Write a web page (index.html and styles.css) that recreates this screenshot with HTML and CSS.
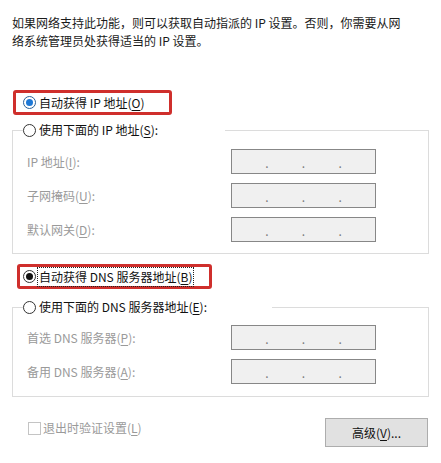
FILE: index.html
```html
<!DOCTYPE html>
<html lang="zh-CN">
<head>
<meta charset="utf-8">
<title>IP 设置</title>
<link rel="stylesheet" href="styles.css">
</head>
<body>
<div class="page">
  <p class="intro">如果网络支持此功能，则可以获取自动指派的 IP 设置。否则，你需要从网<br>络系统管理员处获得适当的 IP 设置。</p>

  <div class="annot annot-ip">
    <span class="radio checked blue"></span>
    <span class="opt-text">自动获得 IP 地址(<u>O</u>)</span>
  </div>

  <fieldset class="group group-ip">
    <legend class="legend legend-ip">
      <span class="radio"></span>
      <span class="opt-text">使用下面的 IP 地址(<u>S</u>):</span>
    </legend>
    <div class="rows">
      <span class="lbl">IP 地址(<u>I</u>):</span>
      <span class="ipbox"><span>.</span><span>.</span><span>.</span></span>
      <span class="lbl">子网掩码(<u>U</u>):</span>
      <span class="ipbox"><span>.</span><span>.</span><span>.</span></span>
      <span class="lbl">默认网关(<u>D</u>):</span>
      <span class="ipbox"><span>.</span><span>.</span><span>.</span></span>
    </div>
  </fieldset>

  <div class="annot annot-dns">
    <span class="radio checked"></span>
    <span class="opt-text focus">自动获得 DNS 服务器地址(<u>B</u>)</span>
  </div>

  <fieldset class="group group-dns">
    <legend class="legend legend-dns">
      <span class="radio"></span>
      <span class="opt-text">使用下面的 DNS 服务器地址(<u>E</u>):</span>
    </legend>
    <div class="rows">
      <span class="lbl">首选 DNS 服务器(<u>P</u>):</span>
      <span class="ipbox"><span>.</span><span>.</span><span>.</span></span>
      <span class="lbl">备用 DNS 服务器(<u>A</u>):</span>
      <span class="ipbox"><span>.</span><span>.</span><span>.</span></span>
    </div>
  </fieldset>

  <div class="footer">
    <div class="check">
      <span class="checkbox"></span>
      <span class="check-text">退出时验证设置(<u>L</u>)</span>
    </div>
    <div class="btn">高级(<u>V</u>)...</div>
  </div>
</div>
</body>
</html>
```

FILE: styles.css
```css
html, body {
  margin: 0;
  padding: 0;
  background: #ffffff;
}

body {
  font-family: "Noto Sans CJK SC", "Noto Sans", sans-serif;
  font-size: 12px;
  line-height: 18px;
  color: #111111;
}

.page {
  width: 441px;
  height: 463px;
  padding-top: 14px;
  box-sizing: border-box;
  overflow: hidden;
}

.intro {
  margin: 0 0 0 12px;
  color: #1a1a1a;
}

u {
  text-decoration: underline;
  text-underline-offset: 2px;
}

/* red annotation boxes */
.annot {
  display: flex;
  align-items: center;
  height: 25px;
  box-sizing: border-box;
  border: 3px solid #cf2f2c;
  border-radius: 3px;
}

.annot-ip {
  width: 159px;
  margin: 40px 0 0 13px;
  padding-left: 7px;
}

.annot-dns {
  width: 195px;
  margin: 10px 0 0 17px;
  padding-left: 3px;
}

/* radios */
.radio {
  position: relative;
  flex: none;
  width: 13px;
  height: 13px;
  box-sizing: border-box;
  border: 1px solid #333333;
  border-radius: 50%;
  background: #ffffff;
}

.radio.checked::after {
  content: "";
  position: absolute;
  left: 2px;
  top: 2px;
  width: 7px;
  height: 7px;
  border-radius: 50%;
  background: #111111;
}

.radio.blue {
  border-color: #2a5f95;
}

.radio.blue::after {
  background: #1e78d6;
}

.opt-text {
  margin-left: 3px;
  white-space: nowrap;
}

.opt-text.focus {
  margin-left: 2px;
  padding: 0 1px;
  outline: 1px dotted #222222;
  outline-offset: 0;
}

/* group boxes */
.group {
  width: 417px;
  box-sizing: border-box;
  margin: 0 0 0 12px;
  border: 1px solid #dcdcdc;
  padding: 10px 0 11px 10px;
  min-inline-size: 0;
}

.group-ip {
  margin-top: 6px;
}

.group-dns {
  margin-top: 9px;
  padding-top: 9px;
  padding-bottom: 12px;
}

.legend {
  display: flex;
  align-items: center;
  height: 18px;
  padding: 0;
  margin: 0;
  box-sizing: border-box;
}

.legend-ip {
  width: 202px;
}

.legend-dns {
  width: 249px;
}

.rows {
  display: grid;
  grid-template-columns: 204px 145px;
  grid-auto-rows: 25px;
  row-gap: 9px;
  margin-left: 4px;
  align-items: center;
}

.lbl {
  color: #9a9a9a;
  white-space: nowrap;
}

.ipbox {
  display: flex;
  justify-content: space-evenly;
  align-items: center;
  height: 25px;
  box-sizing: border-box;
  border: 1px solid #878787;
  background: #f0f0f0;
  color: #7a7a7a;
  padding-top: 2px;
}

/* footer */
.footer {
  display: flex;
  align-items: flex-start;
  margin-top: 21px;
  padding-left: 28px;
  padding-right: 13px;
}

.check {
  display: flex;
  align-items: center;
  height: 18px;
  margin-top: 1px;
}

.checkbox {
  width: 13px;
  height: 13px;
  box-sizing: border-box;
  border: 1px solid #c4c4c4;
  background: #ffffff;
}

.check-text {
  margin-left: 2px;
  color: #9a9a9a;
}

.btn {
  margin-left: auto;
  width: 103px;
  height: 29px;
  box-sizing: border-box;
  border: 1px solid #adadad;
  background: #e1e1e1;
  display: flex;
  align-items: center;
  justify-content: center;
  color: #111111;
}
```
